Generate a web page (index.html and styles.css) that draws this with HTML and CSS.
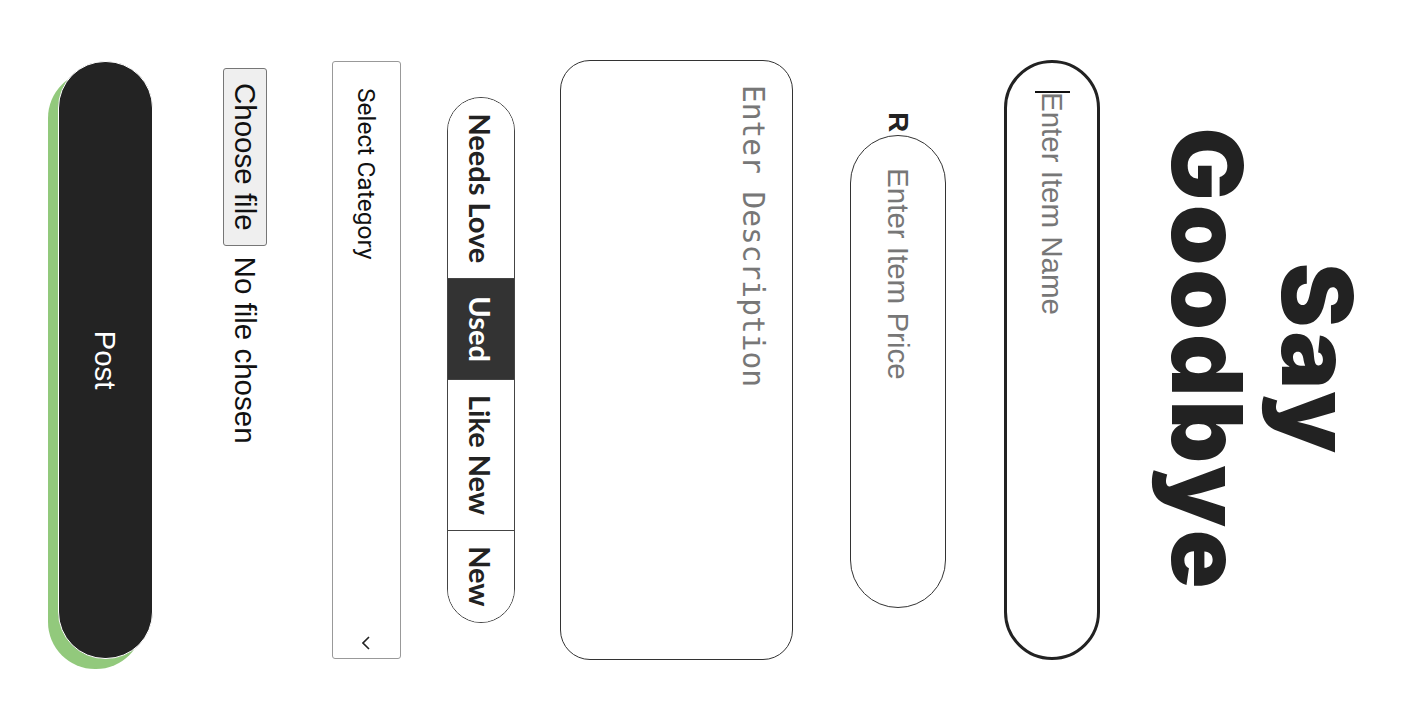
FILE: index.html
```html
<!DOCTYPE html>
<html lang="en">
<head>
<meta charset="utf-8">
<title>Say Goodbye</title>
<link rel="stylesheet" href="styles.css">
</head>
<body>
<div class="viewport">
<div class="stage">
  <form class="form">
    <h1 class="title">Say<br>Goodbye</h1>
    <div class="name-field">
      <input class="name-input" type="text" placeholder="Enter Item Name">
    </div>
    <div class="price-row">
      <label class="currency">R</label>
      <input class="price-input" type="text" placeholder="Enter Item Price">
    </div>
    <textarea class="desc" placeholder="Enter Description"></textarea>
    <div class="segmented">
      <span class="seg">Needs Love</span>
      <span class="seg seg-active">Used</span>
      <span class="seg">Like New</span>
      <span class="seg">New</span>
    </div>
    <div class="select-wrap">
      <div class="select">Select Category</div>
      <svg class="chevron" width="14" height="8" viewBox="0 0 14 8"><path d="M1 1l6 6 6-6" fill="none" stroke="#222" stroke-width="1.6"/></svg>
    </div>
    <label class="file">
      <span class="file-btn">Choose file</span>
      <span class="file-name">No file chosen</span>
    </label>
    <button class="post" type="button">Post</button>
  </form>
</div>
</div>
</body>
</html>
```
FILE: styles.css
```css
html, body {
  margin: 0;
  padding: 0;
  background: #fff;
  overflow: hidden;
}
body {
  width: 1418px;
  height: 720px;
  font-family: "Liberation Sans", Arial, sans-serif;
}
.viewport {
  width: 1418px;
  height: 720px;
  overflow: hidden;
}
.stage {
  width: 720px;
  height: 1418px;
  transform-origin: 0 0;
  transform: translateX(1418px) rotate(90deg);
}
.form {
  display: flex;
  flex-direction: column;
  align-items: center;
  margin: 0;
}
.title {
  margin: 46px 0 0;
  font-family: Inter, "Liberation Sans", sans-serif;
  font-weight: 900;
  font-size: 97px;
  line-height: 110px;
  color: #222;
  text-align: center;
  letter-spacing: 4px;
}
.name-field {
  position: relative;
  margin-top: 52px;
}
.name-field::after {
  content: "";
  position: absolute;
  left: 31px;
  top: 30px;
  width: 2px;
  height: 35px;
  background: #111;
}
.name-input {
  display: block;
  box-sizing: border-box;
  width: 600px;
  height: 96px;
  border: 3px solid #222;
  border-radius: 48px;
  padding: 0 29px;
  font-family: "Liberation Sans", Arial, sans-serif;
  font-size: 29.5px;
  color: #222;
  outline: none;
  background: #fff;
}
.name-input::placeholder, .price-input::placeholder {
  color: #777;
}
.price-row {
  display: flex;
  align-items: center;
  gap: 3px;
  margin-top: 58px;
}
.currency {
  font-family: "Liberation Sans", Arial, sans-serif;
  font-weight: 700;
  font-size: 28px;
  color: #222;
}
.price-input {
  display: block;
  box-sizing: border-box;
  width: 473px;
  height: 96px;
  border: 1px solid #333;
  border-radius: 48px;
  padding: 0 32px;
  font-family: "Liberation Sans", Arial, sans-serif;
  font-size: 29.5px;
  outline: none;
  background: #fff;
}
.desc {
  display: block;
  box-sizing: border-box;
  width: 600px;
  height: 233px;
  margin-top: 57px;
  border: 1px solid #333;
  border-radius: 30px;
  padding: 22px 24px;
  font-family: "DejaVu Sans Mono", "Liberation Mono", monospace;
  font-size: 29.5px;
  resize: none;
  outline: none;
}
.desc::placeholder {
  color: #777;
}
.segmented {
  display: flex;
  height: 68px;
  box-sizing: border-box;
  margin-top: 45px;
  border: 1px solid #444;
  border-radius: 34px;
  overflow: hidden;
}
.seg {
  display: flex;
  align-items: center;
  padding: 0 15px;
  font-family: Lato, "Liberation Sans", sans-serif;
  font-weight: 700;
  font-size: 29px;
  color: #222;
  background: #fff;
}
.seg + .seg {
  border-left: 1px solid #444;
}
.seg-active {
  background: #333;
  color: #fff;
  padding: 0 17px;
}
.select-wrap {
  position: relative;
  margin-top: 46px;
}
.select {
  box-sizing: border-box;
  width: 598px;
  height: 69px;
  border: 1px solid #999;
  border-radius: 3px;
  padding: 0 26px;
  display: flex;
  align-items: center;
  font-family: Roboto, "Liberation Sans", sans-serif;
  font-size: 24.5px;
  color: #111;
  background: #fff;
}
.chevron {
  position: absolute;
  right: 9px;
  top: 31px;
}
.file {
  align-self: flex-start;
  display: flex;
  align-items: center;
  gap: 11px;
  margin: 65px 0 0 68px;
  font-family: "Liberation Sans", Arial, sans-serif;
  font-size: 29.5px;
  color: #111;
}
.file-btn {
  box-sizing: border-box;
  height: 44px;
  display: flex;
  align-items: center;
  padding: 0 14px;
  background: #efefef;
  border: 1px solid #767676;
  border-radius: 3px;
}
.post {
  display: block;
  box-sizing: border-box;
  width: 598px;
  height: 95px;
  margin-top: 70px;
  border: 1px solid #fff;
  border-radius: 47px;
  background: #232323;
  color: #fff;
  font-family: "Liberation Sans", Arial, sans-serif;
  font-size: 29.5px;
  box-shadow: 10px 10px 0 #92c97c;
}
```
